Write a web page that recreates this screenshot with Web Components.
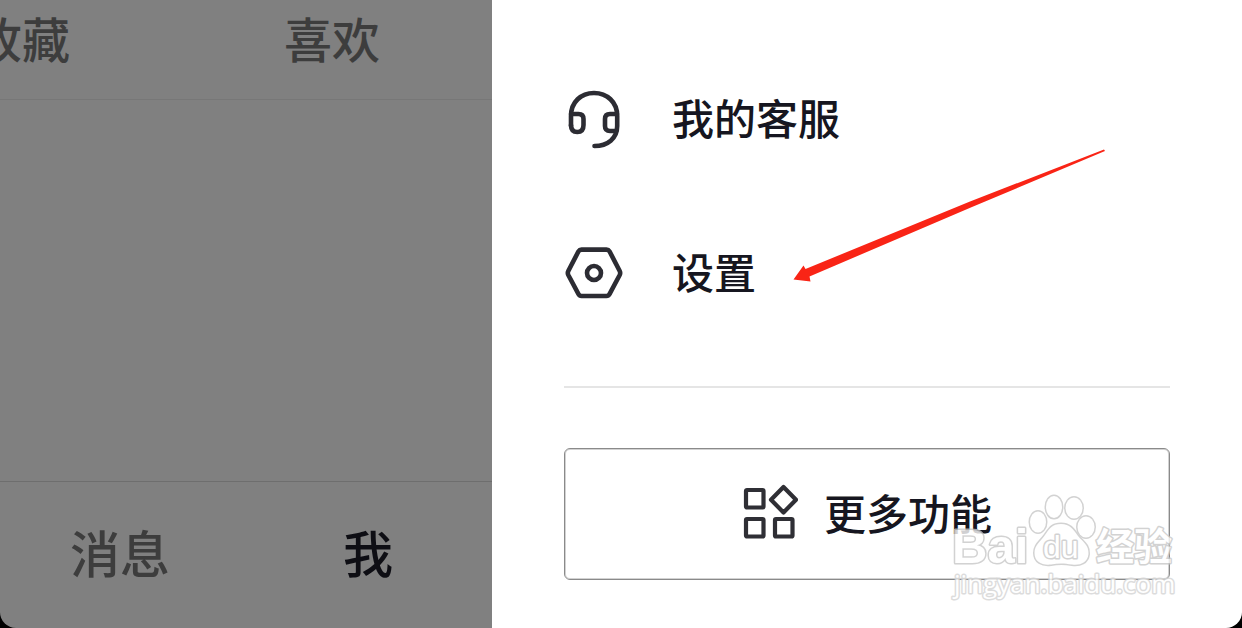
<!DOCTYPE html>
<html lang="zh-CN">
<head>
<meta charset="utf-8">
<meta name="viewport" content="width=device-width, initial-scale=1">
<title>设置</title>
<style>
  html { background: #000; }
  body { margin: 0; font-family: "Noto Sans CJK SC", sans-serif; font-weight: 500; }
</style>
</head>
<body>
<app-screen>
  <profile-page slot="page"></profile-page>
  <side-drawer slot="drawer">
    <menu-row label="我的客服">
      <svg slot="icon" width="60" height="60" viewBox="0 0 60 60" fill="none" stroke="#2c2c33" stroke-width="4.6" stroke-linecap="round" stroke-linejoin="round">
        <path d="M7 37V27C7 13 17 4 30 4S53.200 13 53.200 27V37C53.200 49.500 43.500 57 30.500 57"/>
        <path d="M7 25H14.500Q19.500 25 19.500 30V36Q19.500 43 13.300 43Q7 43 7 36"/>
        <path d="M53 25H46Q41 25 41 30V37Q41 42 46 42H52"/>
      </svg>
    </menu-row>
    <menu-row label="设置">
      <svg slot="icon" width="60" height="60" viewBox="0 0 60 60" fill="none" stroke="#2c2c33" stroke-width="4.600" stroke-linejoin="round">
        <path d="M17.500 6.600H42.500Q44.500 6.600 45.500 8.300L55.700 28Q56.700 30 55.700 32L45.500 51.200Q44.500 53 42.500 53H17.500Q15.500 53 14.500 51.200L4.300 32Q3.300 30 4.300 28L14.500 8.300Q15.500 6.600 17.500 6.600Z"/>
        <circle cx="30" cy="30" r="7"/>
      </svg>
    </menu-row>
    <more-button slot="footer">更多功能</more-button>
  </side-drawer>
</app-screen>

<script>
class AppScreen extends HTMLElement {
  constructor() {
    super();
    this.attachShadow({ mode: "open" }).innerHTML = `
      <style>
        :host { display: grid; grid-template-columns: 492fr 750fr; min-height: 100vh;
                border-radius: 0 0 16px 16px; overflow: hidden; }
      </style>
      <slot name="page"></slot><slot name="drawer"></slot>`;
  }
}

class ProfilePage extends HTMLElement {
  constructor() {
    super();
    this.attachShadow({ mode: "open" }).innerHTML = `
      <style>
        :host { display: flex; flex-direction: column; min-width: 0; overflow: hidden;
                background: #808080; color: #3d3d3d; }
        nav { display: flex; justify-content: flex-end; }
        a { flex: none; text-align: center; white-space: nowrap; color: inherit; text-decoration: none; }
        .tabs { padding: 0 5px 25px 0; border-bottom: 1px solid #777; font-size: 48px; line-height: 74px; }
        .tabs a { width: 310px; }
        main { flex: 1; }
        .bar { padding: 32px 0 40px; border-top: 1px solid #6e6e6e; font-size: 50px; line-height: 74px; }
        .bar a { width: 248px; }
        .bar a[aria-current] { color: #0e0e14; }
      </style>
      <nav class="tabs"><a href="#favorites">收藏</a><a href="#likes">喜欢</a></nav>
      <main></main>
      <nav class="bar"><a href="#messages">消息</a><a href="#me" aria-current="page">我</a></nav>`;
  }
}

class SideDrawer extends HTMLElement {
  constructor() {
    super();
    this.attachShadow({ mode: "open" }).innerHTML = `
      <style>
        :host { display: block; position: relative; box-sizing: border-box; min-width: 0;
                padding: 42px 72px 48px; background: #fff; color: #161620; }
        hr { height: 2px; margin: 36px 0 60px; border: 0; background: #e5e5e5; }
        .arrow { position: absolute; left: 298px; top: 145px; pointer-events: none; }
        water-mark { position: absolute; right: 62px; bottom: 22px; pointer-events: none; }
      </style>
      <slot></slot>
      <hr>
      <slot name="footer"></slot>
      <svg class="arrow" width="320" height="140" viewBox="0 0 320 140" aria-hidden="true">
        <path fill="#f92416" d="M3.500 134.500L13.500 120.500L15.500 124L180 56.500L314 4.500L315 6L182 62L19.500 131.500L20.500 136.500Z"/>
      </svg>
      <water-mark></water-mark>`;
  }
}

class MenuRow extends HTMLElement {
  constructor() {
    super();
    this.attachShadow({ mode: "open" }).innerHTML = `
      <style>
        :host { display: block; }
        button { display: flex; align-items: center; gap: 48px; width: 100%; height: 154px; padding: 0;
                 border: 0; background: none; color: inherit; font: inherit; font-size: 42px;
                 line-height: 60px; text-align: left; }
        span { padding-bottom: 4px; }
        ::slotted(svg) { flex: none; display: block; }
      </style>
      <button type="button"><slot name="icon"></slot><span></span></button>`;
    this.shadowRoot.querySelector("span").textContent = this.getAttribute("label");
  }
}

class MoreButton extends HTMLElement {
  constructor() {
    super();
    this.attachShadow({ mode: "open" }).innerHTML = `
      <style>
        :host { display: block; }
        button { display: flex; align-items: center; justify-content: center; gap: 26px;
                 box-sizing: border-box; width: 100%; height: 132px; padding: 0 0 4px;
                 border: 1px solid #8a8a8a; border-radius: 6px; box-shadow: inset 0 0 0 1px #d2d2d2;
                 background: #fff; color: inherit; font: inherit; font-size: 42px; line-height: 60px; }
      </style>
      <button type="button">
        <svg width="56" height="56" viewBox="0 0 56 56" fill="none" stroke="#2f2f35" stroke-width="4.200" stroke-linejoin="round" aria-hidden="true">
          <rect x="4" y="6" width="17.500" height="17.500" rx="1"/>
          <rect x="4" y="35" width="17.500" height="17.500" rx="1"/>
          <rect x="33" y="35" width="17.500" height="17.500" rx="1"/>
          <path d="M41.500 3L54 15.700L41.500 28.500L29 15.700Z"/>
        </svg>
        <span><slot></slot></span>
      </button>`;
  }
}

class WaterMark extends HTMLElement {
  constructor() {
    super();
    this.attachShadow({ mode: "open" }).innerHTML = `
      <style>
        :host { display: block; opacity: .8; }
        svg { display: block; fill: #fff; stroke: #c8c8c8; stroke-width: 3px;
              paint-order: stroke; stroke-linejoin: round; }
        .paw { stroke-width: 3px; }
        .latin { font: 700 49px "Liberation Sans", sans-serif; }
        .du { font: 400 32px "Liberation Sans", sans-serif; }
        .han { font: 700 38px "Noto Sans CJK SC", sans-serif; }
        .url { font: 400 26px "Open Sans", sans-serif; stroke: #d4d4d4; }
      </style>
      <svg width="230" height="116" viewBox="950 490 230 116">
        <g class="paw">
          <ellipse cx="1038" cy="522" rx="8" ry="10.500"/>
          <ellipse cx="1054" cy="507" rx="8" ry="11"/>
          <ellipse cx="1074" cy="508" rx="8.500" ry="10.500"/>
          <ellipse cx="1086" cy="527" rx="8.500" ry="10.500"/>
          <path d="M1061 524C1070 524 1073 529 1078 536C1083 542 1089 545 1088.500 554C1087.500 563 1080 565.500 1072 564.500C1064 563 1058 563 1051 564.500C1042 565.500 1034.500 562 1034.500 553C1034.500 545 1040 542 1045 535C1050 528 1052 524 1061 524Z"/>
        </g>
        <text class="latin" x="952" y="563">Bai</text>
        <text class="du" x="1043" y="558">du</text>
        <text class="han" x="1096" y="560">经验</text>
        <text class="url" x="954" y="593">jingyan.baidu.com</text>
      </svg>`;
  }
}

customElements.define("water-mark", WaterMark);
customElements.define("app-screen", AppScreen);
customElements.define("profile-page", ProfilePage);
customElements.define("side-drawer", SideDrawer);
customElements.define("menu-row", MenuRow);
customElements.define("more-button", MoreButton);
</script>
</body>
</html>
